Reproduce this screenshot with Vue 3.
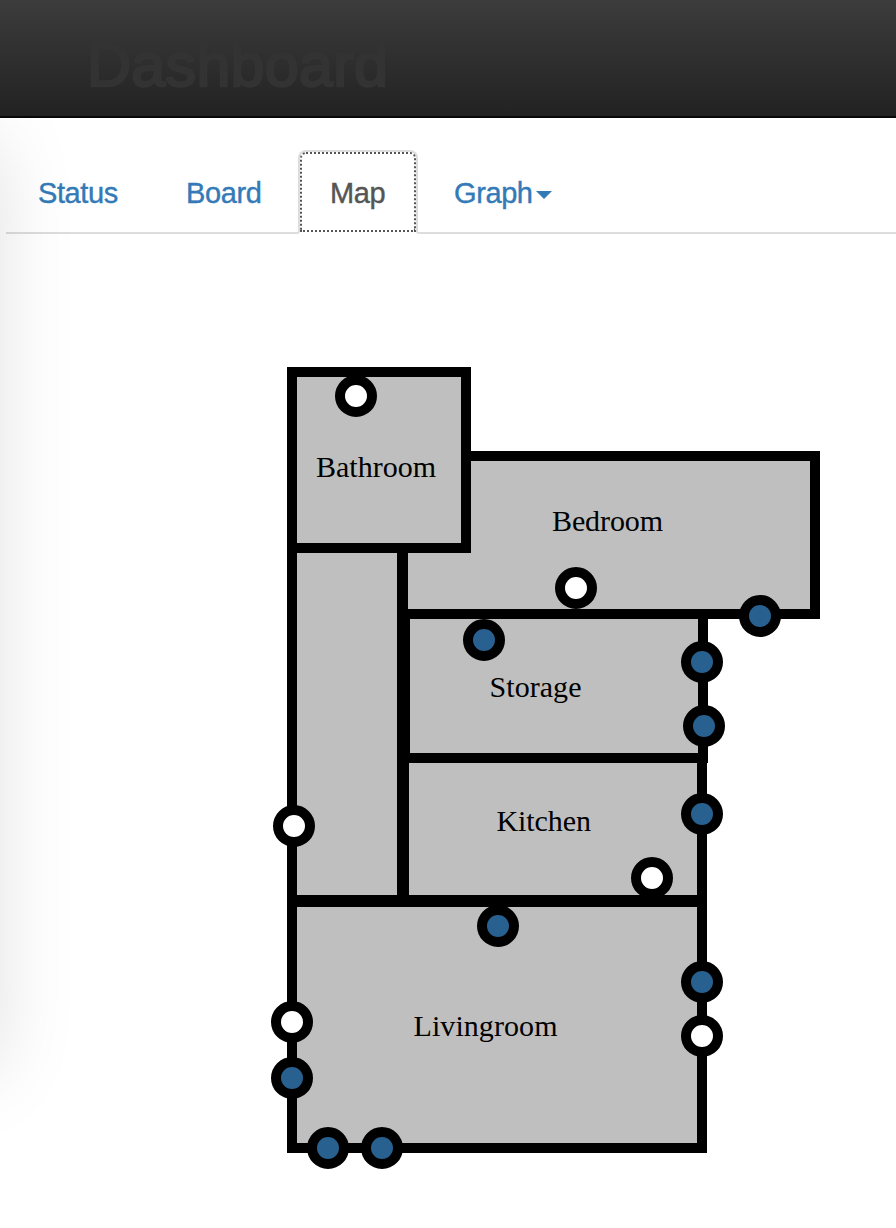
<script setup>
const tabs = [
  { label: 'Status', name: 'status' },
  { label: 'Board', name: 'board' },
  { label: 'Map', name: 'map', active: true },
  { label: 'Graph', name: 'graph', dropdown: true },
]

// Wall centre lines; each wall is 10 units thick.
const rooms = [
  { x: 403, y: 456, w: 412, h: 158 },
  { x: 292, y: 548, w: 110, h: 352 },
  { x: 292, y: 372, w: 174, h: 176 },
  { x: 405, y: 614, w: 298, h: 144 },
  { x: 404, y: 758, w: 298, h: 142 },
  { x: 292, y: 902, w: 410, h: 246 },
]

const labels = [
  { text: 'Bathroom', x: 316, y: 477, w: 120 },
  { text: 'Bedroom', x: 552, y: 531, w: 111 },
  { text: 'Storage', x: 489.5, y: 697, w: 92 },
  { text: 'Kitchen', x: 496.5, y: 831, w: 94.5 },
  { text: 'Livingroom', x: 413.5, y: 1036, w: 144 },
]

const sensors = [
  { x: 356, y: 396 },
  { x: 576, y: 588 },
  { x: 760, y: 616, on: true },
  { x: 484, y: 640, on: true },
  { x: 702, y: 662, on: true },
  { x: 704, y: 726, on: true },
  { x: 702, y: 814, on: true },
  { x: 294, y: 826 },
  { x: 652, y: 878 },
  { x: 498, y: 926, on: true },
  { x: 702, y: 982, on: true },
  { x: 292, y: 1022 },
  { x: 702, y: 1036 },
  { x: 292, y: 1078, on: true },
  { x: 328, y: 1148, on: true },
  { x: 382, y: 1148, on: true },
]
</script>

<template>
  <div class="page">
    <header class="navbar"><h1>Dashboard</h1></header>
    <div class="content">
      <nav class="tabs">
        <a v-for="t in tabs" :key="t.name" class="tab" :class="[t.name, { active: t.active }]">
          {{ t.label }}<span v-if="t.dropdown" class="caret"></span>
        </a>
      </nav>
      <svg class="plan" width="896" height="994" viewBox="0 234 896 994">
        <rect v-for="(r, i) in rooms" :key="'r' + i" class="room" :x="r.x" :y="r.y" :width="r.w" :height="r.h" />
        <circle v-for="(s, i) in sensors" :key="'s' + i" class="sensor" :class="{ on: s.on }" :cx="s.x" :cy="s.y" r="16" />
        <text v-for="l in labels" :key="l.text" :x="l.x" :y="l.y" :textLength="l.w">{{ l.text }}</text>
      </svg>
      <div class="side-shadow"></div>
    </div>
  </div>
</template>

<style>
body {
  background: #fff;
}
</style>

<style scoped>
.page {
  width: 896px;
  height: 1228px;
  overflow: hidden;
  font-family: "Liberation Sans", Arial, sans-serif;
}
.navbar {
  box-sizing: border-box;
  height: 118px;
  padding: 30px 0 0 87px;
  border-bottom: 2px solid #080808;
  background: linear-gradient(#3c3c3c, #222);
}
h1 {
  margin: 0;
  color: #333;
  font-size: 61px;
  font-weight: 400;
  line-height: 70px;
  letter-spacing: 0.3px;
  -webkit-text-stroke: 2.5px #333;
}
.content {
  position: relative;
  height: 1110px;
  overflow: hidden;
}
.side-shadow {
  position: absolute;
  left: -304px;
  top: 24px;
  width: 300px;
  height: 928px;
  box-shadow: 0 0 76px rgba(0, 0, 0, 0.13);
  pointer-events: none;
}
.tabs {
  box-sizing: border-box;
  display: flex;
  gap: 4px;
  height: 116px;
  margin-left: 6px;
  padding-top: 32px;
  border-bottom: 2px solid #ddd;
}
.tab {
  box-sizing: border-box;
  height: 84px;
  padding: 20px 0 20px 30px;
  border: 2px solid transparent;
  border-radius: 8px 8px 0 0;
  color: #337ab7;
  font-size: 29px;
  line-height: 42px;
  letter-spacing: -0.4px;
  white-space: nowrap;
  -webkit-text-stroke: 0.4px currentColor;
}
.status {
  width: 144px;
}
.board {
  width: 140px;
}
.map {
  width: 120px;
}
.graph {
  width: 162px;
}
.active {
  border-color: #ddd;
  border-bottom-color: transparent;
  background: #fff;
  color: #555;
  outline: 2px dotted #555;
  outline-offset: -4px;
}
.caret {
  display: inline-block;
  margin-left: 3px;
  border-top: 8px solid #337ab7;
  border-right: 8px solid transparent;
  border-left: 8px solid transparent;
  vertical-align: middle;
}
.plan {
  display: block;
}
.room {
  fill: #bfbfbf;
  stroke: #000;
  stroke-width: 10;
}
.sensor {
  fill: #fff;
  stroke: #000;
  stroke-width: 10;
}
.sensor.on {
  fill: #286090;
}
.plan text {
  font-family: "Liberation Serif", "Times New Roman", serif;
  font-size: 30px;
}
</style>
